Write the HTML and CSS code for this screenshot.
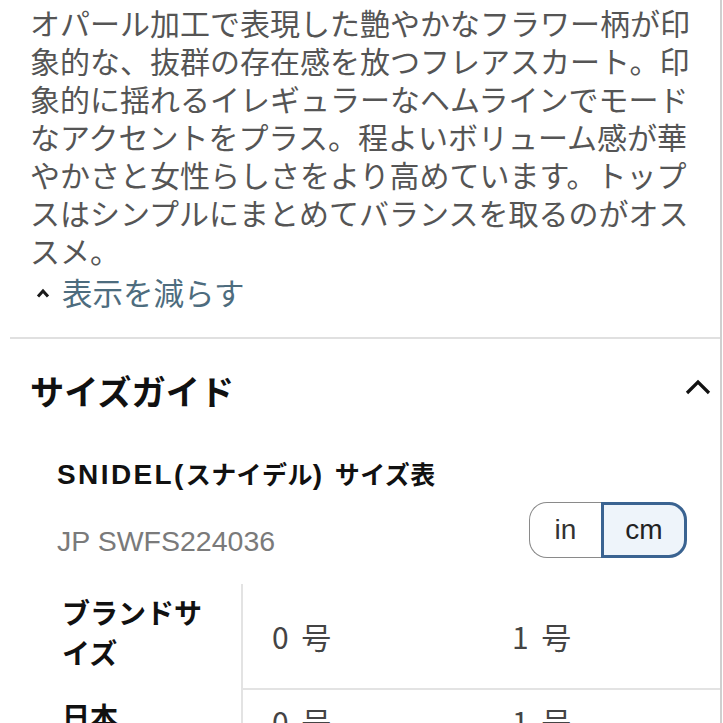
FILE: index.html
```html
<!DOCTYPE html>
<html lang="ja">
<head>
<meta charset="utf-8">
<link rel="stylesheet" href="styles.css">
</head>
<body>
<div class="page">
  <section class="desc">
    <p class="desc-text">オパール加工で表現した艶やかなフラワー柄が印象的な、抜群の存在感を放つフレアスカート。印象的に揺れるイレギュラーなヘムラインでモードなアクセントをプラス。程よいボリューム感が華やかさと女性らしさをより高めています。トップスはシンプルにまとめてバランスを取るのがオススメ。</p>
    <a class="less">
      <svg class="less-icon" width="14" height="12" viewBox="0 0 14 12"><path d="M2 9.5 L7 4 L12 9.5" fill="none" stroke="#1a1a1a" stroke-width="3"/></svg>
      <span>表示を減らす</span>
    </a>
  </section>
  <section class="guide">
    <div class="guide-head">
      <h2 class="guide-title">サイズガイド</h2>
      <svg class="guide-caret" width="26" height="18" viewBox="0 0 26 18"><path d="M2 15 L13 4 L24 15" fill="none" stroke="#111" stroke-width="3.2"/></svg>
    </div>
    <div class="guide-body">
      <h3 class="chart-title"><span class="latin">SNIDEL(</span>スナイデル<span class="latin">) </span>サイズ表</h3>
      <div class="chart-meta">
        <span class="code">JP SWFS224036</span>
        <div class="unit-toggle">
          <span class="unit">in</span>
          <span class="unit unit-active">cm</span>
        </div>
      </div>
      <div class="table">
        <div class="row">
          <div class="label">ブランドサイズ</div>
          <div class="cells"><span class="cell">0 号</span><span class="cell">1 号</span></div>
        </div>
        <div class="row">
          <div class="label">日本</div>
          <div class="cells"><span class="cell">0 号</span><span class="cell">1 号</span></div>
        </div>
      </div>
    </div>
  </section>
</div>
</body>
</html>
```
FILE: styles.css
```css
html, body {
  margin: 0;
  padding: 0;
  background: #fff;
}
body {
  font-family: "Noto Sans CJK JP", "Noto Sans", sans-serif;
  overflow: hidden;
}
.page {
  width: 722px;
  height: 723px;
  border-right: 2px solid #cfcfcf;
  box-sizing: border-box;
  overflow: hidden;
}
.desc {
  padding: 3px 0 0 20px;
  margin-left: 10px;
  border-bottom: 2px solid #e0e0e0;
}
.desc-text {
  margin: 0;
  width: 672px;
  font-size: 30px;
  line-height: 38px;
  color: #555;
}
.less {
  display: flex;
  align-items: center;
  gap: 12px;
  margin-top: 4px;
  margin-bottom: 26px;
  height: 38px;
  padding-left: 6px;
  font-size: 30.5px;
  color: #4d6c7e;
}
.less-icon {
  flex: none;
  margin-top: 2px;
}
.guide {
  padding: 31px 0 0 30px;
}
.guide-head {
  display: flex;
  align-items: center;
  justify-content: space-between;
  height: 40px;
  padding-right: 9px;
}
.guide-title {
  margin: 0;
  font-size: 34.2px;
  font-weight: 700;
  line-height: 40px;
  color: #111;
}
.guide-caret {
  margin-top: -6px;
}
.guide-body {
  padding-left: 27px;
}
.chart-title {
  margin: 47px 0 0;
  font-size: 25px;
  font-weight: 700;
  line-height: 32px;
  color: #111;
  letter-spacing: 0.4px;
}
.latin {
  font-family: "Liberation Sans", sans-serif;
  font-size: 28px;
  letter-spacing: 2.4px;
}
.chart-meta {
  display: flex;
  justify-content: space-between;
  align-items: flex-end;
  margin-top: 11px;
  padding-right: 33px;
}
.code {
  font-family: "Liberation Sans", "Noto Sans CJK JP", sans-serif;
  font-size: 28.5px;
  line-height: 32px;
  color: #7a7a7a;
  margin-bottom: 1px;
}
.unit-toggle {
  display: flex;
  height: 56px;
}
.unit {
  display: flex;
  align-items: center;
  justify-content: center;
  box-sizing: border-box;
  font-family: "Liberation Sans", sans-serif;
  font-size: 28px;
  color: #222;
}
.unit:first-child {
  width: 72px;
  border: 1.5px solid #8a8a8a;
  border-right: none;
  border-radius: 18px 0 0 18px;
  background: #fff;
  color: #333;
}
.unit-active {
  width: 86px;
  border: 3.5px solid #3a6391;
  border-radius: 0 18px 18px 0;
  background: #eef4fa;
}
.table {
  margin-top: 26px;
  width: 657px;
}
.row {
  display: flex;
}
.row + .row .cells {
  border-top: 2px solid #e3e3e3;
}
.label {
  flex: none;
  width: 184px;
  box-sizing: border-box;
  padding: 8px 20px 16px 5px;
  font-size: 28px;
  font-weight: 700;
  line-height: 40px;
  color: #111;
}
.cells {
  flex: 1;
  display: flex;
  align-items: center;
  border-left: 2px solid #e3e3e3;
}
.row:first-child .cells {
  height: 104px;
}
.cell {
  flex: none;
  width: 240px;
  box-sizing: border-box;
  padding-left: 29px;
  font-size: 30px;
  letter-spacing: 3px;
  color: #444;
}
```
